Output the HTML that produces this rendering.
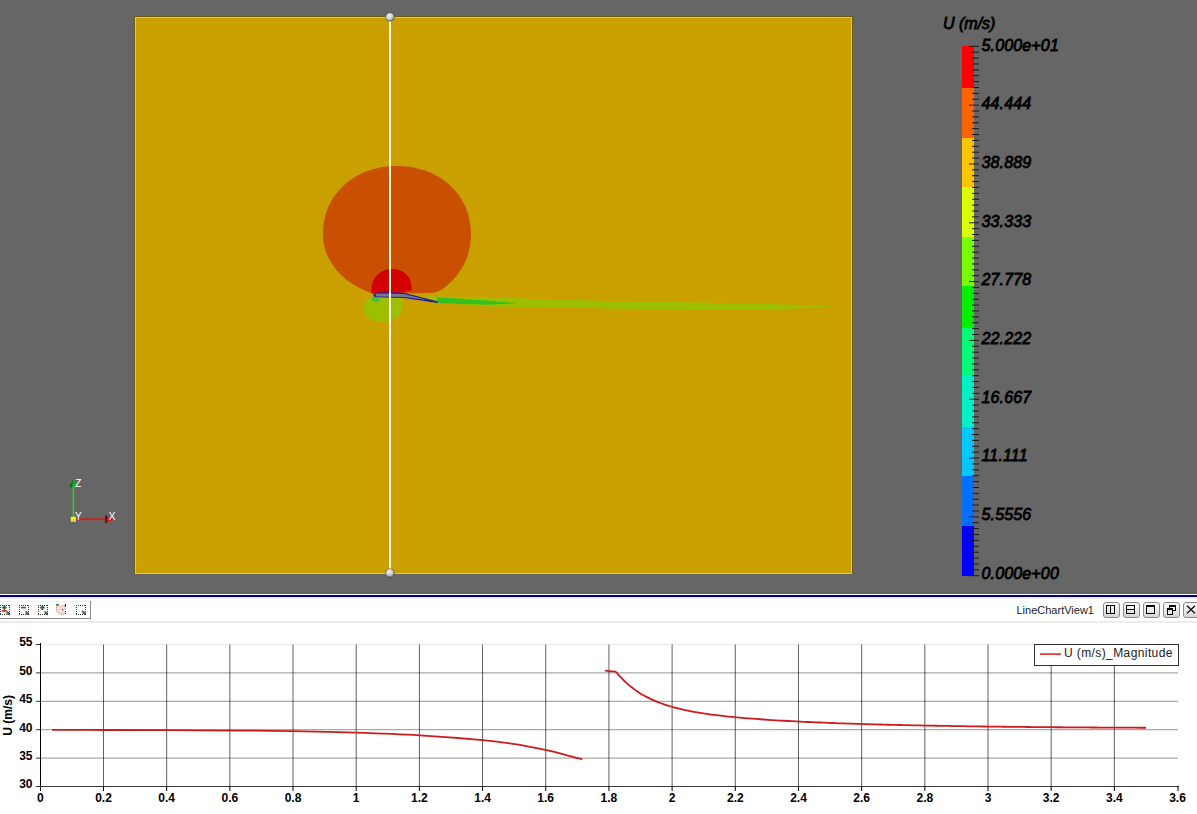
<!DOCTYPE html><html><head><meta charset="utf-8"><style>html,body{margin:0;padding:0;width:1197px;height:814px;overflow:hidden;background:#fff;}svg{position:absolute;left:0;top:0;display:block}text{font-family:"Liberation Sans",sans-serif}</style></head><body><svg width="1197" height="814" viewBox="0 0 1197 814"><defs><radialGradient id="sph" cx="0.4" cy="0.35" r="0.7"><stop offset="0" stop-color="#f4f4f4"/><stop offset="0.6" stop-color="#c8c8cc"/><stop offset="1" stop-color="#64606c"/></radialGradient><linearGradient id="btn" x1="0" y1="0" x2="0" y2="1"><stop offset="0" stop-color="#ffffff"/><stop offset="1" stop-color="#d4d4d4"/></linearGradient></defs><rect x="0" y="0" width="1197" height="593" fill="#666666"/><rect x="0" y="593" width="1197" height="1" fill="#5e5e6e"/><rect x="134" y="16" width="719" height="558" fill="#6e5a18"/><rect x="135" y="17" width="717" height="557" fill="#e8c848"/><rect x="136" y="18" width="715" height="555" fill="#c9a000"/><path d="M 323 234 C 323 194.56 354.08 166 397 166 C 439.92 166 471 194.56 471 234 A 74 68 0 0 1 446 286.5 C 441 290.5 436 292.8 429 293 L 372 293.5 C 360 289 340 279 331 262 C 325 253 323 244 323 234 Z" fill="#c85000"/><path d="M 372.5 296.5 C 366 300 363.5 304 363.5 308.5 C 363.5 316 371 322 382.5 322 C 394 322 402.5 314 402.5 305 C 402.5 302 402 300 401 298.3 L 390 297.8 Z" fill="#9cc000"/><path d="M 425 296.3 L 438 296.5 C 460 296.8 480 297.2 500 297.7 C 540 299 580 300.2 610 301 C 660 302 720 303 760 303.7 C 790 304.5 815 305.5 835 306.8 C 815 307.5 790 309 760 309.7 C 700 309.7 650 309.2 610 308.7 C 570 308 530 307.3 500 306.7 C 470 305.5 450 304 438 303 Z" fill="#9cc000"/><path d="M 437 297.3 C 455 298.3 475 299.8 490 300.7 C 500 301.5 510 302.6 518 303.4 C 505 304 495 304.6 487 304.7 C 470 304.5 450 303.8 437 303 Z" fill="#36c020"/><path d="M 372.8 296.6 C 376 297 379.5 298 379.5 300.5 C 378 302.5 373.5 302 371.2 299.5 Z" fill="#3cc038"/><path d="M 371.5 293.5 C 370 278 380 269 392 269 C 404 269 412.5 277 411.5 290.5 L 400 292.8 Z" fill="#d20000"/><path d="M 373.3 295.3 C 373.6 293.6 375.5 292.6 378 292.4 L 386 292.2 L 404 292.7 L 437.9 301.5 L 437.8 302.9 L 404 298.1 L 386 297.6 L 377 297.3 C 374.5 297 373.2 296.5 373.3 295.3 Z" fill="#1c1c98"/><path d="M 375.3 294.9 C 375.8 293.9 377.5 293.5 380 293.5 L 404 293.9 L 429 300.2 L 404 297.0 L 380 296.6 C 377 296.5 375.3 296 375.3 294.9 Z" fill="#767690"/><rect x="389" y="17" width="2" height="556" fill="#fffbdc"/><circle cx="390" cy="17" r="4.3" fill="url(#sph)" stroke="rgba(30,25,10,0.45)" stroke-width="0.8"/><circle cx="390" cy="573" r="4.3" fill="url(#sph)" stroke="rgba(30,25,10,0.45)" stroke-width="0.8"/><rect x="72.6" y="486" width="1.6" height="32" fill="#3cc03c"/><path d="M 73.4 478.3 L 77 487.3 L 69.8 487.3 Z" fill="#18b020"/><path d="M 69.8 487.3 L 73.4 478.3 L 72 487.3 Z" fill="#0a6010"/><rect x="76" y="518.2" width="31" height="2" fill="#c42424"/><path d="M 114.5 519.3 L 105.5 515.3 L 105.5 523.2 Z" fill="#e01818"/><rect x="105.3" y="515.5" width="1.8" height="7.6" fill="#501010"/><path d="M 70.8 516.8 L 76 516.8 L 76 519 L 73.5 519 L 73.5 521.8 L 70.8 521.8 Z" fill="#f0f020"/><rect x="73.5" y="519" width="2.5" height="2.8" fill="#d8d8a0"/><text x="75" y="487" font-size="10.5" fill="#ffffff">Z</text><text x="75" y="519.5" font-size="10" fill="#ffffff">Y</text><text x="108.5" y="519.8" font-size="10.5" fill="#ffffff">X</text><rect x="962" y="46" width="12" height="42" fill="#ff0000"/><rect x="962" y="88" width="12" height="50" fill="#ff6400"/><rect x="962" y="138" width="12" height="49" fill="#ffc400"/><rect x="962" y="187" width="12" height="50" fill="#dcff00"/><rect x="962" y="237" width="12" height="49" fill="#78ff00"/><rect x="962" y="286" width="12" height="42" fill="#00f000"/><rect x="962" y="328" width="12" height="48" fill="#00ff78"/><rect x="962" y="376" width="12" height="51" fill="#00f0c8"/><rect x="962" y="427" width="12" height="49" fill="#00c8ff"/><rect x="962" y="476" width="12" height="50" fill="#0070ff"/><rect x="962" y="526" width="12" height="50" fill="#0000ff"/><rect x="969" y="45.80" width="10" height="1" fill="#181818"/><rect x="972" y="51.68" width="7" height="1" fill="#181818"/><rect x="972" y="57.56" width="7" height="1" fill="#181818"/><rect x="972" y="63.45" width="7" height="1" fill="#181818"/><rect x="972" y="69.33" width="7" height="1" fill="#181818"/><rect x="972" y="75.21" width="7" height="1" fill="#181818"/><rect x="972" y="81.09" width="7" height="1" fill="#181818"/><rect x="972" y="86.98" width="7" height="1" fill="#181818"/><rect x="972" y="92.86" width="7" height="1" fill="#181818"/><rect x="972" y="98.74" width="7" height="1" fill="#181818"/><rect x="969" y="104.62" width="10" height="1" fill="#181818"/><rect x="972" y="110.50" width="7" height="1" fill="#181818"/><rect x="972" y="116.39" width="7" height="1" fill="#181818"/><rect x="972" y="122.27" width="7" height="1" fill="#181818"/><rect x="972" y="128.15" width="7" height="1" fill="#181818"/><rect x="972" y="134.03" width="7" height="1" fill="#181818"/><rect x="972" y="139.92" width="7" height="1" fill="#181818"/><rect x="972" y="145.80" width="7" height="1" fill="#181818"/><rect x="972" y="151.68" width="7" height="1" fill="#181818"/><rect x="972" y="157.56" width="7" height="1" fill="#181818"/><rect x="969" y="163.44" width="10" height="1" fill="#181818"/><rect x="972" y="169.33" width="7" height="1" fill="#181818"/><rect x="972" y="175.21" width="7" height="1" fill="#181818"/><rect x="972" y="181.09" width="7" height="1" fill="#181818"/><rect x="972" y="186.97" width="7" height="1" fill="#181818"/><rect x="972" y="192.86" width="7" height="1" fill="#181818"/><rect x="972" y="198.74" width="7" height="1" fill="#181818"/><rect x="972" y="204.62" width="7" height="1" fill="#181818"/><rect x="972" y="210.50" width="7" height="1" fill="#181818"/><rect x="972" y="216.38" width="7" height="1" fill="#181818"/><rect x="969" y="222.27" width="10" height="1" fill="#181818"/><rect x="972" y="228.15" width="7" height="1" fill="#181818"/><rect x="972" y="234.03" width="7" height="1" fill="#181818"/><rect x="972" y="239.91" width="7" height="1" fill="#181818"/><rect x="972" y="245.80" width="7" height="1" fill="#181818"/><rect x="972" y="251.68" width="7" height="1" fill="#181818"/><rect x="972" y="257.56" width="7" height="1" fill="#181818"/><rect x="972" y="263.44" width="7" height="1" fill="#181818"/><rect x="972" y="269.32" width="7" height="1" fill="#181818"/><rect x="972" y="275.21" width="7" height="1" fill="#181818"/><rect x="969" y="281.09" width="10" height="1" fill="#181818"/><rect x="972" y="286.97" width="7" height="1" fill="#181818"/><rect x="972" y="292.85" width="7" height="1" fill="#181818"/><rect x="972" y="298.74" width="7" height="1" fill="#181818"/><rect x="972" y="304.62" width="7" height="1" fill="#181818"/><rect x="972" y="310.50" width="7" height="1" fill="#181818"/><rect x="972" y="316.38" width="7" height="1" fill="#181818"/><rect x="972" y="322.26" width="7" height="1" fill="#181818"/><rect x="972" y="328.15" width="7" height="1" fill="#181818"/><rect x="972" y="334.03" width="7" height="1" fill="#181818"/><rect x="969" y="339.91" width="10" height="1" fill="#181818"/><rect x="972" y="345.79" width="7" height="1" fill="#181818"/><rect x="972" y="351.68" width="7" height="1" fill="#181818"/><rect x="972" y="357.56" width="7" height="1" fill="#181818"/><rect x="972" y="363.44" width="7" height="1" fill="#181818"/><rect x="972" y="369.32" width="7" height="1" fill="#181818"/><rect x="972" y="375.20" width="7" height="1" fill="#181818"/><rect x="972" y="381.09" width="7" height="1" fill="#181818"/><rect x="972" y="386.97" width="7" height="1" fill="#181818"/><rect x="972" y="392.85" width="7" height="1" fill="#181818"/><rect x="969" y="398.73" width="10" height="1" fill="#181818"/><rect x="972" y="404.62" width="7" height="1" fill="#181818"/><rect x="972" y="410.50" width="7" height="1" fill="#181818"/><rect x="972" y="416.38" width="7" height="1" fill="#181818"/><rect x="972" y="422.26" width="7" height="1" fill="#181818"/><rect x="972" y="428.14" width="7" height="1" fill="#181818"/><rect x="972" y="434.03" width="7" height="1" fill="#181818"/><rect x="972" y="439.91" width="7" height="1" fill="#181818"/><rect x="972" y="445.79" width="7" height="1" fill="#181818"/><rect x="972" y="451.67" width="7" height="1" fill="#181818"/><rect x="969" y="457.56" width="10" height="1" fill="#181818"/><rect x="972" y="463.44" width="7" height="1" fill="#181818"/><rect x="972" y="469.32" width="7" height="1" fill="#181818"/><rect x="972" y="475.20" width="7" height="1" fill="#181818"/><rect x="972" y="481.08" width="7" height="1" fill="#181818"/><rect x="972" y="486.97" width="7" height="1" fill="#181818"/><rect x="972" y="492.85" width="7" height="1" fill="#181818"/><rect x="972" y="498.73" width="7" height="1" fill="#181818"/><rect x="972" y="504.61" width="7" height="1" fill="#181818"/><rect x="972" y="510.50" width="7" height="1" fill="#181818"/><rect x="969" y="516.38" width="10" height="1" fill="#181818"/><rect x="972" y="522.26" width="7" height="1" fill="#181818"/><rect x="972" y="528.14" width="7" height="1" fill="#181818"/><rect x="972" y="534.02" width="7" height="1" fill="#181818"/><rect x="972" y="539.91" width="7" height="1" fill="#181818"/><rect x="972" y="545.79" width="7" height="1" fill="#181818"/><rect x="972" y="551.67" width="7" height="1" fill="#181818"/><rect x="972" y="557.55" width="7" height="1" fill="#181818"/><rect x="972" y="563.44" width="7" height="1" fill="#181818"/><rect x="972" y="569.32" width="7" height="1" fill="#181818"/><rect x="969" y="575.20" width="10" height="1" fill="#181818"/><text x="981.5" y="50.7" font-size="16" font-style="italic" letter-spacing="0.15" fill="#000" stroke="#000" stroke-width="0.8">5.000e+01</text><text x="981.5" y="109.3" font-size="16" font-style="italic" letter-spacing="0.15" fill="#000" stroke="#000" stroke-width="0.8">44.444</text><text x="981.5" y="168.0" font-size="16" font-style="italic" letter-spacing="0.15" fill="#000" stroke="#000" stroke-width="0.8">38.889</text><text x="981.5" y="226.6" font-size="16" font-style="italic" letter-spacing="0.15" fill="#000" stroke="#000" stroke-width="0.8">33.333</text><text x="981.5" y="285.3" font-size="16" font-style="italic" letter-spacing="0.15" fill="#000" stroke="#000" stroke-width="0.8">27.778</text><text x="981.5" y="343.9" font-size="16" font-style="italic" letter-spacing="0.15" fill="#000" stroke="#000" stroke-width="0.8">22.222</text><text x="981.5" y="402.6" font-size="16" font-style="italic" letter-spacing="0.15" fill="#000" stroke="#000" stroke-width="0.8">16.667</text><text x="981.5" y="461.2" font-size="16" font-style="italic" letter-spacing="0.15" fill="#000" stroke="#000" stroke-width="0.8">11.111</text><text x="981.5" y="519.9" font-size="16" font-style="italic" letter-spacing="0.15" fill="#000" stroke="#000" stroke-width="0.8">5.5556</text><text x="981.5" y="578.5" font-size="16" font-style="italic" letter-spacing="0.15" fill="#000" stroke="#000" stroke-width="0.8">0.000e+00</text><text x="943" y="28.7" font-size="16" font-style="italic" fill="#000" stroke="#000" stroke-width="0.8">U (m/s)</text><rect x="0" y="594" width="1197" height="1" fill="#ffffff"/><rect x="0" y="595" width="1197" height="2" fill="#000080"/><rect x="0" y="597" width="1197" height="2" fill="#eceefa"/><rect x="0" y="601" width="91" height="1" fill="#f2f2f2"/><rect x="90" y="601" width="1" height="18" fill="#8c8c8c"/><rect x="0" y="618" width="91" height="1" fill="#8c8c8c"/><rect x="0" y="621" width="1197" height="2" fill="#ececec"/><rect x="0" y="605" width="1" height="1" fill="#3a3a3a"/><rect x="0" y="614" width="1" height="1" fill="#3a3a3a"/><rect x="2" y="605" width="1" height="1" fill="#3a3a3a"/><rect x="2" y="614" width="1" height="1" fill="#3a3a3a"/><rect x="4" y="605" width="1" height="1" fill="#3a3a3a"/><rect x="4" y="614" width="1" height="1" fill="#3a3a3a"/><rect x="6" y="605" width="1" height="1" fill="#3a3a3a"/><rect x="6" y="614" width="1" height="1" fill="#3a3a3a"/><rect x="8" y="605" width="1" height="1" fill="#3a3a3a"/><rect x="8" y="614" width="1" height="1" fill="#3a3a3a"/><rect x="9" y="605" width="1" height="1" fill="#3a3a3a"/><rect x="9" y="614" width="1" height="1" fill="#3a3a3a"/><rect x="0" y="605" width="1" height="1" fill="#3a3a3a"/><rect x="9" y="605" width="1" height="1" fill="#3a3a3a"/><rect x="0" y="607" width="1" height="1" fill="#3a3a3a"/><rect x="9" y="607" width="1" height="1" fill="#3a3a3a"/><rect x="0" y="609" width="1" height="1" fill="#3a3a3a"/><rect x="9" y="609" width="1" height="1" fill="#3a3a3a"/><rect x="0" y="611" width="1" height="1" fill="#3a3a3a"/><rect x="9" y="611" width="1" height="1" fill="#3a3a3a"/><rect x="0" y="613" width="1" height="1" fill="#3a3a3a"/><rect x="9" y="613" width="1" height="1" fill="#3a3a3a"/><rect x="0" y="614" width="1" height="1" fill="#3a3a3a"/><rect x="9" y="614" width="1" height="1" fill="#3a3a3a"/><rect x="3.5" y="605.3" width="1.8" height="4.6" fill="#207020"/><rect x="2.2" y="606.7" width="4.4" height="1.7" fill="#207020"/><rect x="1.8" y="610" width="4.8" height="1.8" fill="#d83040"/><path d="M 6.3 610.4 L 10.3 612.9 L 8.9 613.4 L 10.3 615.0 L 9.5 615.4 L 8.1 614.0 L 6.8999999999999995 615.0 Z" fill="#5a5a5a"/><rect x="19" y="605" width="1" height="1" fill="#3a3a3a"/><rect x="19" y="614" width="1" height="1" fill="#3a3a3a"/><rect x="21" y="605" width="1" height="1" fill="#3a3a3a"/><rect x="21" y="614" width="1" height="1" fill="#3a3a3a"/><rect x="23" y="605" width="1" height="1" fill="#3a3a3a"/><rect x="23" y="614" width="1" height="1" fill="#3a3a3a"/><rect x="25" y="605" width="1" height="1" fill="#3a3a3a"/><rect x="25" y="614" width="1" height="1" fill="#3a3a3a"/><rect x="27" y="605" width="1" height="1" fill="#3a3a3a"/><rect x="27" y="614" width="1" height="1" fill="#3a3a3a"/><rect x="28" y="605" width="1" height="1" fill="#3a3a3a"/><rect x="28" y="614" width="1" height="1" fill="#3a3a3a"/><rect x="19" y="605" width="1" height="1" fill="#3a3a3a"/><rect x="28" y="605" width="1" height="1" fill="#3a3a3a"/><rect x="19" y="607" width="1" height="1" fill="#3a3a3a"/><rect x="28" y="607" width="1" height="1" fill="#3a3a3a"/><rect x="19" y="609" width="1" height="1" fill="#3a3a3a"/><rect x="28" y="609" width="1" height="1" fill="#3a3a3a"/><rect x="19" y="611" width="1" height="1" fill="#3a3a3a"/><rect x="28" y="611" width="1" height="1" fill="#3a3a3a"/><rect x="19" y="613" width="1" height="1" fill="#3a3a3a"/><rect x="28" y="613" width="1" height="1" fill="#3a3a3a"/><rect x="19" y="614" width="1" height="1" fill="#3a3a3a"/><rect x="28" y="614" width="1" height="1" fill="#3a3a3a"/><rect x="21" y="606.8" width="4.8" height="1.6" fill="#a82838"/><path d="M 25.3 610.4 L 29.3 612.9 L 27.900000000000002 613.4 L 29.3 615.0 L 28.5 615.4 L 27.1 614.0 L 25.900000000000002 615.0 Z" fill="#5a5a5a"/><rect x="38" y="605" width="1" height="1" fill="#3a3a3a"/><rect x="38" y="614" width="1" height="1" fill="#3a3a3a"/><rect x="40" y="605" width="1" height="1" fill="#3a3a3a"/><rect x="40" y="614" width="1" height="1" fill="#3a3a3a"/><rect x="42" y="605" width="1" height="1" fill="#3a3a3a"/><rect x="42" y="614" width="1" height="1" fill="#3a3a3a"/><rect x="44" y="605" width="1" height="1" fill="#3a3a3a"/><rect x="44" y="614" width="1" height="1" fill="#3a3a3a"/><rect x="46" y="605" width="1" height="1" fill="#3a3a3a"/><rect x="46" y="614" width="1" height="1" fill="#3a3a3a"/><rect x="47" y="605" width="1" height="1" fill="#3a3a3a"/><rect x="47" y="614" width="1" height="1" fill="#3a3a3a"/><rect x="38" y="605" width="1" height="1" fill="#3a3a3a"/><rect x="47" y="605" width="1" height="1" fill="#3a3a3a"/><rect x="38" y="607" width="1" height="1" fill="#3a3a3a"/><rect x="47" y="607" width="1" height="1" fill="#3a3a3a"/><rect x="38" y="609" width="1" height="1" fill="#3a3a3a"/><rect x="47" y="609" width="1" height="1" fill="#3a3a3a"/><rect x="38" y="611" width="1" height="1" fill="#3a3a3a"/><rect x="47" y="611" width="1" height="1" fill="#3a3a3a"/><rect x="38" y="613" width="1" height="1" fill="#3a3a3a"/><rect x="47" y="613" width="1" height="1" fill="#3a3a3a"/><rect x="38" y="614" width="1" height="1" fill="#3a3a3a"/><rect x="47" y="614" width="1" height="1" fill="#3a3a3a"/><rect x="41.5" y="605.3" width="1.8" height="4.6" fill="#206a20"/><rect x="40.2" y="606.7" width="4.4" height="1.7" fill="#206a20"/><path d="M 44.3 610.4 L 48.3 612.9 L 46.9 613.4 L 48.3 615.0 L 47.5 615.4 L 46.099999999999994 614.0 L 44.9 615.0 Z" fill="#5a5a5a"/><path d="M 56.5 605 L 60 606.5 L 65 605 L 65.3 609 L 63 610.5 L 66 613.5 L 62 614.5 L 58 613 L 56.5 611 Z" fill="#f2dcd4" stroke="#b89080" stroke-width="0.9" stroke-dasharray="1.2 0.8"/><rect x="56" y="604" width="3" height="1.5" fill="#4a7a4a"/><rect x="65" y="604" width="1" height="3" fill="#303030"/><rect x="65" y="611" width="1" height="1" fill="#303030"/><rect x="65" y="613" width="1" height="1" fill="#303030"/><rect x="62" y="609" width="1" height="1" fill="#802010"/><rect x="76" y="605" width="1" height="1" fill="#3a3a3a"/><rect x="76" y="614" width="1" height="1" fill="#3a3a3a"/><rect x="78" y="605" width="1" height="1" fill="#3a3a3a"/><rect x="78" y="614" width="1" height="1" fill="#3a3a3a"/><rect x="80" y="605" width="1" height="1" fill="#3a3a3a"/><rect x="80" y="614" width="1" height="1" fill="#3a3a3a"/><rect x="82" y="605" width="1" height="1" fill="#3a3a3a"/><rect x="82" y="614" width="1" height="1" fill="#3a3a3a"/><rect x="84" y="605" width="1" height="1" fill="#3a3a3a"/><rect x="84" y="614" width="1" height="1" fill="#3a3a3a"/><rect x="85" y="605" width="1" height="1" fill="#3a3a3a"/><rect x="85" y="614" width="1" height="1" fill="#3a3a3a"/><rect x="76" y="605" width="1" height="1" fill="#3a3a3a"/><rect x="85" y="605" width="1" height="1" fill="#3a3a3a"/><rect x="76" y="607" width="1" height="1" fill="#3a3a3a"/><rect x="85" y="607" width="1" height="1" fill="#3a3a3a"/><rect x="76" y="609" width="1" height="1" fill="#3a3a3a"/><rect x="85" y="609" width="1" height="1" fill="#3a3a3a"/><rect x="76" y="611" width="1" height="1" fill="#3a3a3a"/><rect x="85" y="611" width="1" height="1" fill="#3a3a3a"/><rect x="76" y="613" width="1" height="1" fill="#3a3a3a"/><rect x="85" y="613" width="1" height="1" fill="#3a3a3a"/><rect x="76" y="614" width="1" height="1" fill="#3a3a3a"/><rect x="85" y="614" width="1" height="1" fill="#3a3a3a"/><path d="M 82 610 L 86 612.5 L 84.6 613 L 86 614.6 L 85.2 615 L 83.8 613.6 L 82.6 614.6 Z" fill="#5a5a5a"/><text x="1016.5" y="614" font-size="11" fill="#1a1a2a">LineChartView1</text><rect x="1103.5" y="602.5" width="16" height="15" rx="2.5" fill="url(#btn)" stroke="#8a8a8a" stroke-width="1"/><rect x="1123.5" y="602.5" width="16" height="15" rx="2.5" fill="url(#btn)" stroke="#8a8a8a" stroke-width="1"/><rect x="1143.5" y="602.5" width="16" height="15" rx="2.5" fill="url(#btn)" stroke="#8a8a8a" stroke-width="1"/><rect x="1163.5" y="602.5" width="16" height="15" rx="2.5" fill="url(#btn)" stroke="#8a8a8a" stroke-width="1"/><rect x="1183.5" y="602.5" width="16" height="15" rx="2.5" fill="url(#btn)" stroke="#8a8a8a" stroke-width="1"/><rect x="1106" y="605" width="9" height="1" fill="#000"/><rect x="1106" y="613" width="9" height="1" fill="#000"/><rect x="1106" y="605" width="1" height="9" fill="#000"/><rect x="1114" y="605" width="1" height="9" fill="#000"/><rect x="1110" y="605" width="1" height="9" fill="#000"/><rect x="1126" y="605" width="9" height="1" fill="#000"/><rect x="1126" y="613" width="9" height="1" fill="#000"/><rect x="1126" y="605" width="1" height="9" fill="#000"/><rect x="1134" y="605" width="1" height="9" fill="#000"/><rect x="1126" y="609" width="9" height="1" fill="#000"/><rect x="1146" y="605" width="9" height="2" fill="#000"/><rect x="1146" y="613" width="9" height="1" fill="#000"/><rect x="1146" y="605" width="1" height="9" fill="#000"/><rect x="1154" y="605" width="1" height="9" fill="#000"/><rect x="1169" y="605" width="7" height="2" fill="#000"/><rect x="1169" y="610" width="7" height="1" fill="#000"/><rect x="1169" y="605" width="1" height="6" fill="#000"/><rect x="1175" y="605" width="1" height="6" fill="#000"/><rect x="1167" y="608" width="6" height="6" fill="#e6e6e6"/><rect x="1167" y="608" width="6" height="2" fill="#000"/><rect x="1167" y="614" width="6" height="1" fill="#000"/><rect x="1167" y="608" width="1" height="7" fill="#000"/><rect x="1172" y="608" width="1" height="7" fill="#000"/><path d="M 1187 605.8 L 1195 613.4 M 1195 605.8 L 1187 613.4" stroke="#000" stroke-width="1.3"/><rect x="41" y="672.40" width="1137" height="1" fill="rgba(0,0,0,0.42)"/><rect x="41" y="700.80" width="1137" height="1" fill="rgba(0,0,0,0.42)"/><rect x="41" y="729.20" width="1137" height="1" fill="rgba(0,0,0,0.42)"/><rect x="41" y="757.60" width="1137" height="1" fill="rgba(0,0,0,0.42)"/><rect x="41" y="644" width="1137" height="1" fill="#e8e8e8"/><rect x="102.98" y="644.5" width="1" height="142" fill="rgba(0,0,0,0.62)"/><rect x="166.16" y="644.5" width="1" height="142" fill="rgba(0,0,0,0.62)"/><rect x="229.34" y="644.5" width="1" height="142" fill="rgba(0,0,0,0.62)"/><rect x="292.52" y="644.5" width="1" height="142" fill="rgba(0,0,0,0.62)"/><rect x="355.70" y="644.5" width="1" height="142" fill="rgba(0,0,0,0.62)"/><rect x="418.88" y="644.5" width="1" height="142" fill="rgba(0,0,0,0.62)"/><rect x="482.06" y="644.5" width="1" height="142" fill="rgba(0,0,0,0.62)"/><rect x="545.24" y="644.5" width="1" height="142" fill="rgba(0,0,0,0.62)"/><rect x="608.42" y="644.5" width="1" height="142" fill="rgba(0,0,0,0.62)"/><rect x="671.60" y="644.5" width="1" height="142" fill="rgba(0,0,0,0.62)"/><rect x="734.78" y="644.5" width="1" height="142" fill="rgba(0,0,0,0.62)"/><rect x="797.96" y="644.5" width="1" height="142" fill="rgba(0,0,0,0.62)"/><rect x="861.14" y="644.5" width="1" height="142" fill="rgba(0,0,0,0.62)"/><rect x="924.32" y="644.5" width="1" height="142" fill="rgba(0,0,0,0.62)"/><rect x="987.50" y="644.5" width="1" height="142" fill="rgba(0,0,0,0.62)"/><rect x="1050.68" y="644.5" width="1" height="142" fill="rgba(0,0,0,0.62)"/><rect x="1113.86" y="644.5" width="1" height="142" fill="rgba(0,0,0,0.62)"/><rect x="40" y="643" width="1" height="148" fill="#000"/><rect x="40" y="786" width="1139" height="1" fill="#3a3a3a"/><rect x="1177.5" y="786" width="1" height="5" fill="#000"/><rect x="36" y="644.00" width="4" height="1" fill="#333"/><rect x="36" y="672.40" width="4" height="1" fill="#333"/><rect x="36" y="700.80" width="4" height="1" fill="#333"/><rect x="36" y="729.20" width="4" height="1" fill="#333"/><rect x="36" y="757.60" width="4" height="1" fill="#333"/><rect x="36" y="786.00" width="4" height="1" fill="#333"/><rect x="102.98" y="786" width="1" height="5" fill="#000"/><rect x="166.16" y="786" width="1" height="5" fill="#000"/><rect x="229.34" y="786" width="1" height="5" fill="#000"/><rect x="292.52" y="786" width="1" height="5" fill="#000"/><rect x="355.70" y="786" width="1" height="5" fill="#000"/><rect x="418.88" y="786" width="1" height="5" fill="#000"/><rect x="482.06" y="786" width="1" height="5" fill="#000"/><rect x="545.24" y="786" width="1" height="5" fill="#000"/><rect x="608.42" y="786" width="1" height="5" fill="#000"/><rect x="671.60" y="786" width="1" height="5" fill="#000"/><rect x="734.78" y="786" width="1" height="5" fill="#000"/><rect x="797.96" y="786" width="1" height="5" fill="#000"/><rect x="861.14" y="786" width="1" height="5" fill="#000"/><rect x="924.32" y="786" width="1" height="5" fill="#000"/><rect x="987.50" y="786" width="1" height="5" fill="#000"/><rect x="1050.68" y="786" width="1" height="5" fill="#000"/><rect x="1113.86" y="786" width="1" height="5" fill="#000"/><text x="32.5" y="646.3" font-size="12" font-weight="bold" text-anchor="end" fill="#000">55</text><text x="32.5" y="674.7" font-size="12" font-weight="bold" text-anchor="end" fill="#000">50</text><text x="32.5" y="703.1" font-size="12" font-weight="bold" text-anchor="end" fill="#000">45</text><text x="32.5" y="731.5" font-size="12" font-weight="bold" text-anchor="end" fill="#000">40</text><text x="32.5" y="759.9" font-size="12" font-weight="bold" text-anchor="end" fill="#000">35</text><text x="32.5" y="788.3" font-size="12" font-weight="bold" text-anchor="end" fill="#000">30</text><text x="40.3" y="802" font-size="12" font-weight="bold" text-anchor="middle" fill="#000">0</text><text x="103.5" y="802" font-size="12" font-weight="bold" text-anchor="middle" fill="#000">0.2</text><text x="166.7" y="802" font-size="12" font-weight="bold" text-anchor="middle" fill="#000">0.4</text><text x="229.8" y="802" font-size="12" font-weight="bold" text-anchor="middle" fill="#000">0.6</text><text x="293.0" y="802" font-size="12" font-weight="bold" text-anchor="middle" fill="#000">0.8</text><text x="356.2" y="802" font-size="12" font-weight="bold" text-anchor="middle" fill="#000">1</text><text x="419.4" y="802" font-size="12" font-weight="bold" text-anchor="middle" fill="#000">1.2</text><text x="482.6" y="802" font-size="12" font-weight="bold" text-anchor="middle" fill="#000">1.4</text><text x="545.7" y="802" font-size="12" font-weight="bold" text-anchor="middle" fill="#000">1.6</text><text x="608.9" y="802" font-size="12" font-weight="bold" text-anchor="middle" fill="#000">1.8</text><text x="672.1" y="802" font-size="12" font-weight="bold" text-anchor="middle" fill="#000">2</text><text x="735.3" y="802" font-size="12" font-weight="bold" text-anchor="middle" fill="#000">2.2</text><text x="798.5" y="802" font-size="12" font-weight="bold" text-anchor="middle" fill="#000">2.4</text><text x="861.6" y="802" font-size="12" font-weight="bold" text-anchor="middle" fill="#000">2.6</text><text x="924.8" y="802" font-size="12" font-weight="bold" text-anchor="middle" fill="#000">2.8</text><text x="988.0" y="802" font-size="12" font-weight="bold" text-anchor="middle" fill="#000">3</text><text x="1051.2" y="802" font-size="12" font-weight="bold" text-anchor="middle" fill="#000">3.2</text><text x="1114.4" y="802" font-size="12" font-weight="bold" text-anchor="middle" fill="#000">3.4</text><text x="1177.5" y="802" font-size="12" font-weight="bold" text-anchor="middle" fill="#000">3.6</text><text transform="translate(11.6,715.3) rotate(-90)" font-size="12" font-weight="bold" text-anchor="middle" fill="#000">U (m/s)</text><path d="M 52.00 729.90 C 60.50 729.92 84.00 729.95 103.00 730.00 C 122.00 730.05 143.17 730.10 166.00 730.20 C 188.83 730.30 218.90 730.45 240.00 730.60 C 261.10 730.75 273.38 730.77 292.60 731.10 C 311.82 731.43 334.13 731.90 355.30 732.60 C 376.47 733.30 398.32 734.05 419.60 735.30 C 440.88 736.55 467.07 738.62 483.00 740.10 C 498.93 741.58 504.65 742.52 515.20 744.20 C 525.75 745.88 537.95 748.43 546.30 750.20 C 554.65 751.97 559.32 753.28 565.30 754.80 C 571.28 756.32 579.38 758.55 582.20 759.30" fill="none" stroke="#cc1c20" stroke-width="1.8" stroke-linejoin="round"/><path d="M 605.00 670.50 C 606.07 670.63 609.57 671.05 611.40 671.30 C 613.23 671.55 614.73 671.29 616.00 671.98 C 617.27 672.68 618.00 674.36 619.00 675.47 C 620.00 676.59 621.00 677.65 622.00 678.68 C 623.00 679.70 624.00 680.68 625.00 681.62 C 626.00 682.56 627.00 683.46 628.00 684.33 C 629.00 685.19 630.00 686.02 631.00 686.81 C 632.00 687.61 633.00 688.37 634.00 689.11 C 635.00 689.84 636.00 690.54 637.00 691.22 C 638.00 691.89 639.00 692.54 640.00 693.16 C 641.00 693.79 642.00 694.39 643.00 694.96 C 644.00 695.54 645.00 696.09 646.00 696.63 C 647.00 697.16 648.00 697.67 649.00 698.16 C 650.00 698.66 651.00 699.13 652.00 699.59 C 653.00 700.05 654.00 700.48 655.00 700.91 C 656.00 701.33 657.00 701.74 658.00 702.14 C 659.00 702.53 660.00 702.91 661.00 703.28 C 662.00 703.64 663.00 704.00 664.00 704.34 C 665.00 704.68 666.00 705.01 667.00 705.33 C 668.00 705.64 669.00 705.95 670.00 706.25 C 671.00 706.55 672.00 706.83 673.00 707.11 C 674.00 707.39 675.00 707.66 676.00 707.92 C 677.00 708.18 678.00 708.43 679.00 708.68 C 680.00 708.92 681.00 709.16 682.00 709.39 C 683.00 709.61 684.00 709.84 685.00 710.05 C 686.00 710.27 687.00 710.48 688.00 710.68 C 689.00 710.88 690.00 711.08 691.00 711.27 C 692.00 711.46 693.00 711.65 694.00 711.83 C 695.00 712.01 696.00 712.19 697.00 712.36 C 698.00 712.53 698.17 712.57 700.00 712.86 C 701.83 713.14 705.33 713.69 708.00 714.07 C 710.67 714.45 713.33 714.79 716.00 715.13 C 718.67 715.46 721.33 715.77 724.00 716.06 C 726.67 716.36 729.33 716.63 732.00 716.90 C 734.67 717.16 737.33 717.41 740.00 717.65 C 742.67 717.89 745.33 718.11 748.00 718.33 C 750.67 718.55 753.33 718.75 756.00 718.95 C 758.67 719.15 761.33 719.34 764.00 719.52 C 766.67 719.70 769.33 719.87 772.00 720.04 C 774.67 720.21 777.33 720.37 780.00 720.53 C 782.67 720.68 785.33 720.83 788.00 720.98 C 790.67 721.12 793.33 721.26 796.00 721.40 C 798.67 721.53 801.33 721.66 804.00 721.79 C 806.67 721.92 809.33 722.04 812.00 722.16 C 814.67 722.28 817.33 722.39 820.00 722.50 C 822.67 722.61 825.33 722.72 828.00 722.83 C 830.67 722.93 833.33 723.03 836.00 723.13 C 838.67 723.23 841.33 723.32 844.00 723.42 C 846.67 723.51 849.33 723.60 852.00 723.69 C 854.67 723.77 857.33 723.86 860.00 723.94 C 862.67 724.03 865.33 724.11 868.00 724.18 C 870.67 724.26 873.33 724.34 876.00 724.41 C 878.67 724.48 881.33 724.56 884.00 724.63 C 886.67 724.70 889.33 724.76 892.00 724.83 C 894.67 724.89 897.33 724.96 900.00 725.02 C 902.67 725.08 905.33 725.14 908.00 725.20 C 910.67 725.26 913.33 725.32 916.00 725.37 C 918.67 725.43 921.33 725.48 924.00 725.54 C 926.67 725.59 929.33 725.64 932.00 725.69 C 934.67 725.74 937.33 725.79 940.00 725.83 C 942.67 725.88 945.33 725.93 948.00 725.97 C 950.67 726.02 953.33 726.06 956.00 726.10 C 958.67 726.14 961.33 726.18 964.00 726.22 C 966.67 726.26 969.33 726.30 972.00 726.34 C 974.67 726.38 977.33 726.41 980.00 726.45 C 982.67 726.49 985.33 726.52 988.00 726.55 C 990.67 726.59 993.33 726.62 996.00 726.65 C 998.67 726.68 1001.33 726.72 1004.00 726.75 C 1006.67 726.78 1009.33 726.81 1012.00 726.83 C 1014.67 726.86 1017.33 726.89 1020.00 726.92 C 1022.67 726.94 1025.33 726.97 1028.00 727.00 C 1030.67 727.02 1033.33 727.05 1036.00 727.07 C 1038.67 727.10 1041.33 727.12 1044.00 727.14 C 1046.67 727.16 1049.33 727.19 1052.00 727.21 C 1054.67 727.23 1057.33 727.25 1060.00 727.27 C 1062.67 727.29 1065.33 727.31 1068.00 727.33 C 1070.67 727.35 1073.33 727.37 1076.00 727.39 C 1078.67 727.41 1081.33 727.42 1084.00 727.44 C 1086.67 727.46 1089.33 727.48 1092.00 727.49 C 1094.67 727.51 1097.33 727.53 1100.00 727.54 C 1102.67 727.56 1105.33 727.57 1108.00 727.59 C 1110.67 727.60 1113.33 727.62 1116.00 727.63 C 1118.67 727.64 1121.33 727.66 1124.00 727.67 C 1126.67 727.68 1129.33 727.70 1132.00 727.71 C 1134.67 727.72 1137.67 727.73 1140.00 727.75 C 1142.33 727.76 1145.00 727.77 1146.00 727.77" fill="none" stroke="#cc1c20" stroke-width="1.8" stroke-linejoin="round"/><rect x="1034.5" y="644.5" width="144" height="21" fill="#fff" stroke="#333" stroke-width="1"/><rect x="1040" y="653.3" width="21" height="1.6" fill="#e02828"/><text x="1064" y="657" font-size="12" letter-spacing="0.4" fill="#1a1a1a">U (m/s)_Magnitude</text></svg></body></html>
